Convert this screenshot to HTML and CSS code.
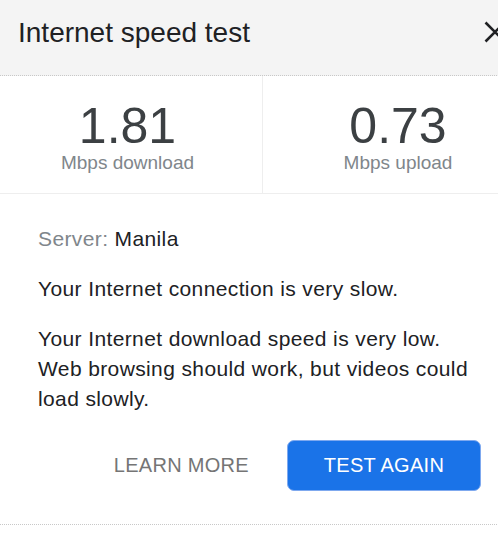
FILE: index.html
```html
<!DOCTYPE html>
<html lang="en">
<head>
<meta charset="utf-8">
<title>Internet speed test</title>
<link rel="stylesheet" href="styles.css">
</head>
<body>
<div class="card">
  <header class="head">
    <h1 class="title">Internet speed test</h1>
    <button class="close" aria-label="Close">
      <svg viewBox="0 0 22 22" width="22" height="22"><path d="M1.5 1.5 L20.5 20.5 M20.5 1.5 L1.5 20.5" stroke="#202124" stroke-width="2.6" fill="none"/></svg>
    </button>
  </header>
  <section class="stats">
    <div class="stat stat-left">
      <div class="num">1.81</div>
      <div class="unit">Mbps download</div>
    </div>
    <div class="stat">
      <div class="num">0.73</div>
      <div class="unit">Mbps upload</div>
    </div>
  </section>
  <section class="content">
    <p class="para"><span class="muted">Server:</span> Manila</p>
    <p class="para">Your Internet connection is very slow.</p>
    <p class="para">Your Internet download speed is very low. Web browsing should work, but videos could load slowly.</p>
    <div class="actions">
      <button class="link-btn">LEARN MORE</button>
      <button class="primary-btn">TEST AGAIN</button>
    </div>
  </section>
</div>
</body>
</html>
```
FILE: styles.css
```css
html, body {
  margin: 0;
  padding: 0;
  background: #ffffff;
  overflow: hidden;
}
body {
  font-family: "Liberation Sans", Arial, sans-serif;
  color: #202124;
}
.card {
  width: 540px;
  margin-left: -7px;
}
.head {
  box-sizing: border-box;
  height: 76px;
  background: #f4f4f4;
  border-bottom: 1px dotted #c8c8c8;
  display: flex;
  justify-content: space-between;
  align-items: flex-start;
  padding: 17px 27px 0 25px;
}
.title {
  margin: 0;
  font-size: 28px;
  font-weight: normal;
  line-height: 32px;
  color: #202124;
}
.close {
  margin: 4px 0 0 0;
  padding: 0;
  border: 0;
  background: none;
  width: 22px;
  height: 22px;
  display: block;
}
.close svg { display: block; }
.stats {
  display: grid;
  grid-template-columns: 270px 1fr;
  border-bottom: 1px solid #eeeeee;
}
.stat {
  box-sizing: border-box;
  height: 117px;
  padding-top: 22px;
  text-align: center;
}
.stat-left {
  border-right: 1px solid #eeeeee;
}
.num {
  font-size: 50px;
  line-height: 56px;
  color: #3c4043;
}
.unit {
  font-size: 19px;
  line-height: 18px;
  color: #80868b;
}
.content {
  padding: 30px 52px 33px 45px;
  border-bottom: 1px dotted #c8c8c8;
}
.para {
  margin: 0 0 20px 0;
  font-size: 21px;
  line-height: 30px;
  letter-spacing: 0.38px;
  color: #202124;
}
.muted {
  color: #80868b;
}
.actions {
  display: flex;
  justify-content: flex-end;
  align-items: center;
  gap: 38px;
  margin-top: 26px;
}
.link-btn {
  font-family: inherit;
  font-size: 20px;
  letter-spacing: 0.3px;
  background: none;
  border: 0;
  padding: 0;
  color: #757575;
}
.primary-btn {
  font-family: inherit;
  font-size: 20px;
  letter-spacing: 0.3px;
  background: #1a73e8;
  color: #ffffff;
  border: 1px solid #7fa9ef;
  border-radius: 7px;
  width: 194px;
  height: 51px;
  padding: 0;
}
```
